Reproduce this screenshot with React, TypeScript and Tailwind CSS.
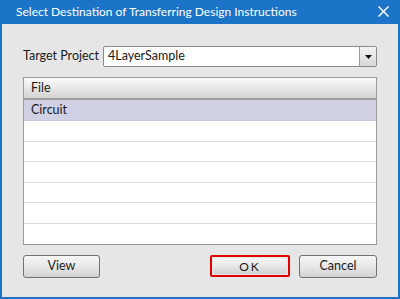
export default function App() {
  const rows = ["Circuit", "", "", "", "", "", ""]

  return (
    <div className="w-[400px] h-[299px] bg-[#1c74c8] px-[2px] pb-[2px] flex flex-col font-['Lato',sans-serif] text-[12.5px] text-[#1a1a1a]">
      {/* title bar */}
      <div className="h-[24px] flex items-center justify-between pl-[14px] pr-[9px] text-white text-[12px]">
        <span>Select Destination of Transferring Design Instructions</span>
        <svg width="11" height="11" viewBox="0 0 11 11" className="mb-[1px]">
          <path d="M0.5 0.5 L10.5 10.5 M10.5 0.5 L0.5 10.5" stroke="white" strokeWidth="1.5" />
        </svg>
      </div>

      <div className="flex-1 bg-[#e6e6e6] flex flex-col px-[21px] pt-[22px]">
        <div className="flex items-center h-[21px]">
          <span className="w-[80px]">Target Project</span>
          <div className="flex-1 h-[21px] flex border border-[#8a8a8a] rounded-[2px] bg-white">
            <div className="flex-1 flex items-center pl-[4px]">4LayerSample</div>
            <div className="w-[17px] border-l border-[#9a9a9a] bg-gradient-to-b from-[#f4f4f4] to-[#d8d8d8] flex items-center justify-center">
              <svg width="7" height="4" viewBox="0 0 7 4">
                <path d="M0 0 H7 L3.5 4 Z" fill="#111" />
              </svg>
            </div>
          </div>
        </div>

        <div className="mt-[10px] border border-[#9a9a9a] bg-white flex flex-col">
          <div className="h-[22px] flex items-center pl-[7px] bg-gradient-to-b from-[#fbfbfb] to-[#d4d4d4] border-b-2 border-[#9c9c9c]">
            File
          </div>
          {rows.map((r, i) => (
            <div
              key={i}
              className={
                i === 0
                  ? "h-[21px] flex items-center pl-[7px] bg-[#d1d1e6] border-b border-[#c8c8d8]"
                  : i === rows.length - 1
                  ? "h-[20px]"
                  : "h-[20.6px] border-b border-[#dadada]"
              }
            >
              {r}
            </div>
          ))}
        </div>

        <div className="mt-[10px] flex items-center justify-between">
          <button className="w-[77px] h-[23px] rounded-[3px] border border-[#707070] bg-gradient-to-b from-[#f6f6f6] via-[#e8e8e8] to-[#d2d2d2]">
            View
          </button>
          <div className="flex gap-[9px]">
            <div className="border-2 border-[#e00000] rounded-[2px] p-[1px] w-[80px] h-[22px] flex">
              <button className="flex-1 rounded-[2px] bg-gradient-to-b from-[#f6f6f6] via-[#e8e8e8] to-[#d2d2d2] tracking-[2px] text-[12px]">
                OK
              </button>
            </div>
            <button className="w-[78px] h-[23px] rounded-[3px] border border-[#707070] bg-gradient-to-b from-[#f6f6f6] via-[#e8e8e8] to-[#d2d2d2]">
              Cancel
            </button>
          </div>
        </div>
      </div>
    </div>
  )
}
